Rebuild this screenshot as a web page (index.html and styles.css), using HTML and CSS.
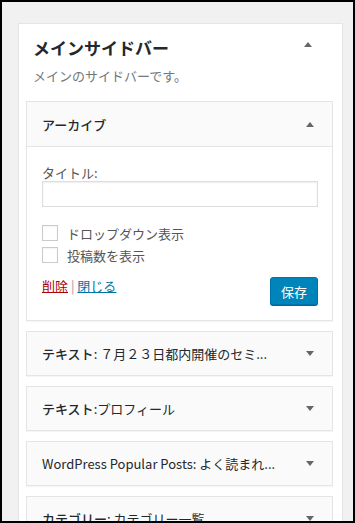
FILE: index.html
```html
<!DOCTYPE html>
<html lang="ja">
<head>
    <meta charset="UTF-8">
    <meta name="viewport" content="width=device-width, initial-scale=1.0">
    <title>ウィジェット</title>
    <link rel="stylesheet" href="styles.css">
</head>
<body>
    <div class="sidebar">
        <div class="sidebar-head">
            <h2>メインサイドバー</h2>
            <span class="arrow up"></span>
        </div>
        <p class="sidebar-desc">メインのサイドバーです。</p>

        <div class="widget open">
            <div class="widget-top">
                <h3><span class="widget-name">アーカイブ</span></h3>
                <span class="arrow up"></span>
            </div>
            <div class="widget-inside">
                <label class="field-label" for="title">タイトル:</label>
                <input type="text" id="title" class="field">
                <div class="checks">
                    <label class="check"><input type="checkbox"><span>ドロップダウン表示</span></label>
                    <label class="check"><input type="checkbox"><span>投稿数を表示</span></label>
                </div>
                <div class="widget-control">
                    <div class="links">
                        <a href="#" class="delete">削除</a> | <a href="#" class="close">閉じる</a>
                    </div>
                    <button type="button" class="save">保存</button>
                </div>
            </div>
        </div>

        <div class="widget">
            <div class="widget-top">
                <h3><span class="widget-name">テキスト</span>: ７月２３日都内開催のセミ...</h3>
                <span class="arrow down"></span>
            </div>
        </div>

        <div class="widget">
            <div class="widget-top">
                <h3><span class="widget-name">テキスト</span>:プロフィール</h3>
                <span class="arrow down"></span>
            </div>
        </div>

        <div class="widget">
            <div class="widget-top">
                <h3>WordPress Popular Posts: よく読まれ...</h3>
                <span class="arrow down"></span>
            </div>
        </div>

        <div class="widget">
            <div class="widget-top">
                <h3><span class="widget-name">カテゴリー</span>: カテゴリー一覧</h3>
                <span class="arrow down"></span>
            </div>
        </div>
    </div>
</body>
</html>
```

FILE: styles.css
```css
html,
body {
    margin: 0;
}

body {
    height: 523px;
    box-sizing: border-box;
    border: 2px solid #000;
    overflow: hidden;
    background: #f1f1f1;
    padding: 21px 10px 0 16px;
    font-family: "Noto Sans CJK JP", "Noto Sans", sans-serif;
    color: #444;
    font-size: 13px;
}

.sidebar {
    background: #fff;
    border: 1px solid #e5e5e5;
    padding: 0 9px 20px 7px;
    box-shadow: 0 1px 1px rgba(0, 0, 0, 0.04);
}

.sidebar-head {
    display: flex;
    align-items: center;
    justify-content: space-between;
    padding: 12px 21px 0 7px;
}

.sidebar-head h2 {
    margin: 0;
    font-size: 17px;
    line-height: 24px;
    font-weight: 700;
    color: #23282d;
}

.sidebar-head .arrow {
    margin-top: -8px;
}

.sidebar-desc {
    margin: 7px 0 16px 7px;
    line-height: 18px;
    color: #72777c;
}

.arrow {
    width: 0;
    height: 0;
    border-left: 4px solid transparent;
    border-right: 4px solid transparent;
}

.arrow.up {
    border-bottom: 5px solid #666;
}

.arrow.down {
    border-top: 5px solid #666;
}

.widget {
    border: 1px solid #e5e5e5;
    background: #fff;
    margin-bottom: 10px;
    box-shadow: 0 1px 1px rgba(0, 0, 0, 0.04);
}

.widget-top {
    display: flex;
    align-items: center;
    justify-content: space-between;
    height: 43px;
    padding: 0 18px 0 15px;
    background: #fafafa;
}

.widget.open .widget-top {
    height: 44px;
    border-bottom: 1px solid #e5e5e5;
}

.widget-top h3 {
    margin: 0;
    font-size: 13px;
    font-weight: 400;
    color: #23282d;
    white-space: nowrap;
}

.widget-name {
    font-weight: 500;
}

.widget-inside {
    padding: 18px 14px 15px 15px;
}

.field-label {
    display: block;
    line-height: 16px;
    color: #555;
}

.field {
    display: block;
    box-sizing: border-box;
    width: 100%;
    height: 26px;
    margin: 0;
    border: 1px solid #ddd;
    box-shadow: inset 0 1px 2px rgba(0, 0, 0, 0.07);
}

.checks {
    display: flex;
    flex-direction: column;
    gap: 6px;
    margin-top: 18px;
}

.check {
    display: flex;
    align-items: center;
    gap: 9px;
    height: 16px;
    color: #555;
}

.check input {
    appearance: none;
    width: 16px;
    height: 16px;
    margin: 0;
    border: 1px solid #c8ccd0;
    background: #fff;
    box-shadow: inset 0 1px 2px rgba(0, 0, 0, 0.05);
}

.widget-control {
    display: flex;
    align-items: flex-start;
    justify-content: space-between;
    margin-top: 14px;
}

.links {
    line-height: 18px;
    color: #999;
}

.links a {
    text-decoration: underline;
}

.links .delete {
    color: #a00;
}

.links .close {
    color: #0073aa;
}

.save {
    width: 48px;
    height: 28px;
    padding: 0;
    border: 1px solid #0073aa;
    border-radius: 3px;
    background: #0085ba;
    box-shadow: 0 1px 0 #006799;
    color: #fff;
    font-family: inherit;
    font-size: 13px;
}
```
